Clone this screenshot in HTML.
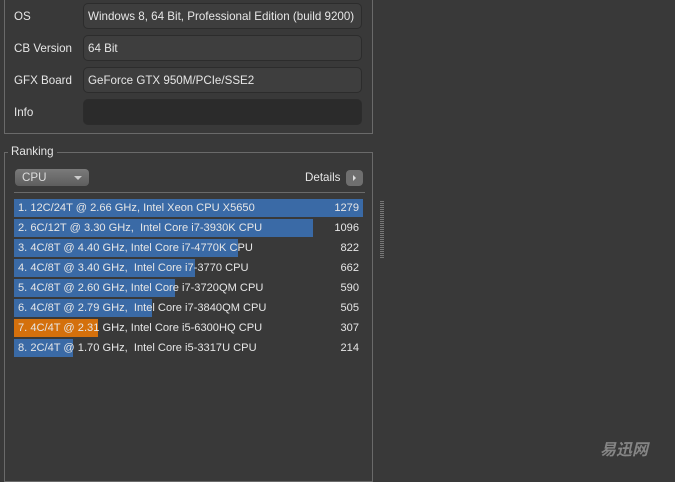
<!DOCTYPE html>
<html><head><style>
body{margin:0;width:675px;height:465px;background:#393939;font-family:"Liberation Sans",sans-serif;font-size:12px;color:#e6e6e6;position:relative;overflow:hidden}
.a{position:absolute}
.lbl{left:14px;font-size:11.6px}
.fld{left:83px;width:279px;height:26px;border:1px solid #2c2c2c;border-radius:5px;background:#3e3e3e;box-sizing:border-box;padding:6px 0 0 4px;white-space:nowrap;font-size:11.6px}
.bar{left:14px;height:18px;background:#3a6aa6}
.rt{left:18px;white-space:nowrap;font-size:11.1px}
.num{right:316px;text-align:right;font-size:11.1px}
</style></head><body>
<div class="a" style="left:4px;top:0;width:369px;height:134px;border:1px solid #6a6a6a;border-top:none;box-sizing:border-box"></div>
<div class="a lbl" style="top:10px">OS</div>
<div class="a fld" style="top:3px">Windows 8, 64 Bit, Professional Edition (build 9200)</div>
<div class="a lbl" style="top:42px">CB Version</div>
<div class="a fld" style="top:35px">64 Bit</div>
<div class="a lbl" style="top:74px">GFX Board</div>
<div class="a fld" style="top:67px">GeForce GTX 950M/PCIe/SSE2</div>
<div class="a lbl" style="top:106px">Info</div>
<div class="a fld" style="top:99px;background:#2b2b2b"></div>

<div class="a" style="left:4px;top:152px;width:369px;height:330px;border:1px solid #6a6a6a;box-sizing:border-box"></div>
<div class="a" style="left:8px;top:145px;background:#393939;padding:0 3px;font-size:11.6px">Ranking</div>
<div class="a" style="left:15px;top:169px;width:74px;height:17px;border-radius:4px;background:linear-gradient(#7a7a7a,#5e5e5e);color:#ddd;box-sizing:border-box;padding:2px 0 0 7px;font-size:11.6px">CPU<span class="a" style="left:59px;top:7px;border:4px solid transparent;border-top:4px solid #ccc;border-bottom:none"></span></div>
<div class="a" style="left:305px;top:171px;font-size:11.6px">Details</div>
<div class="a" style="left:346px;top:170px;width:17px;height:16px;border-radius:4px;background:#6f6f6f"><span class="a" style="left:7px;top:5px;border:3px solid transparent;border-left:3px solid #ddd;border-right:none"></span></div>
<div class="a" style="left:14px;top:192px;width:351px;height:1px;background:#6a6a6a"></div>

<div class="a bar" style="top:199px;width:349px"></div>
<div class="a bar" style="top:219px;width:299px"></div>
<div class="a bar" style="top:239px;width:224px"></div>
<div class="a bar" style="top:259px;width:181px"></div>
<div class="a bar" style="top:279px;width:161px"></div>
<div class="a bar" style="top:299px;width:138px"></div>
<div class="a bar" style="top:319px;width:84px;background:#d4700c"></div>
<div class="a bar" style="top:339px;width:59px"></div>

<div class="a rt" style="top:202px">1. 12C/24T @ 2.66 GHz, Intel Xeon CPU X5650</div><div class="a num" style="top:202px">1279</div>
<div class="a rt" style="top:222px">2. 6C/12T @ 3.30 GHz,&nbsp; Intel Core i7-3930K CPU</div><div class="a num" style="top:222px">1096</div>
<div class="a rt" style="top:242px">3. 4C/8T @ 4.40 GHz, Intel Core i7-4770K CPU</div><div class="a num" style="top:242px">822</div>
<div class="a rt" style="top:262px">4. 4C/8T @ 3.40 GHz,&nbsp; Intel Core i7-3770 CPU</div><div class="a num" style="top:262px">662</div>
<div class="a rt" style="top:282px">5. 4C/8T @ 2.60 GHz, Intel Core i7-3720QM CPU</div><div class="a num" style="top:282px">590</div>
<div class="a rt" style="top:302px">6. 4C/8T @ 2.79 GHz,&nbsp; Intel Core i7-3840QM CPU</div><div class="a num" style="top:302px">505</div>
<div class="a rt" style="top:322px">7. 4C/4T @ 2.31 GHz, Intel Core i5-6300HQ CPU</div><div class="a num" style="top:322px">307</div>
<div class="a rt" style="top:342px">8. 2C/4T @ 1.70 GHz,&nbsp; Intel Core i5-3317U CPU</div><div class="a num" style="top:342px">214</div>

<div class="a" style="left:380px;top:201px;width:4px;height:58px;background:repeating-linear-gradient(#777 0 1px,transparent 1px 2px)"></div>
<div class="a" style="left:600px;top:436px;font-family:'Noto Sans CJK SC',sans-serif;font-size:16px;font-weight:bold;font-style:italic;color:#858585">易迅网</div>
</body></html>
